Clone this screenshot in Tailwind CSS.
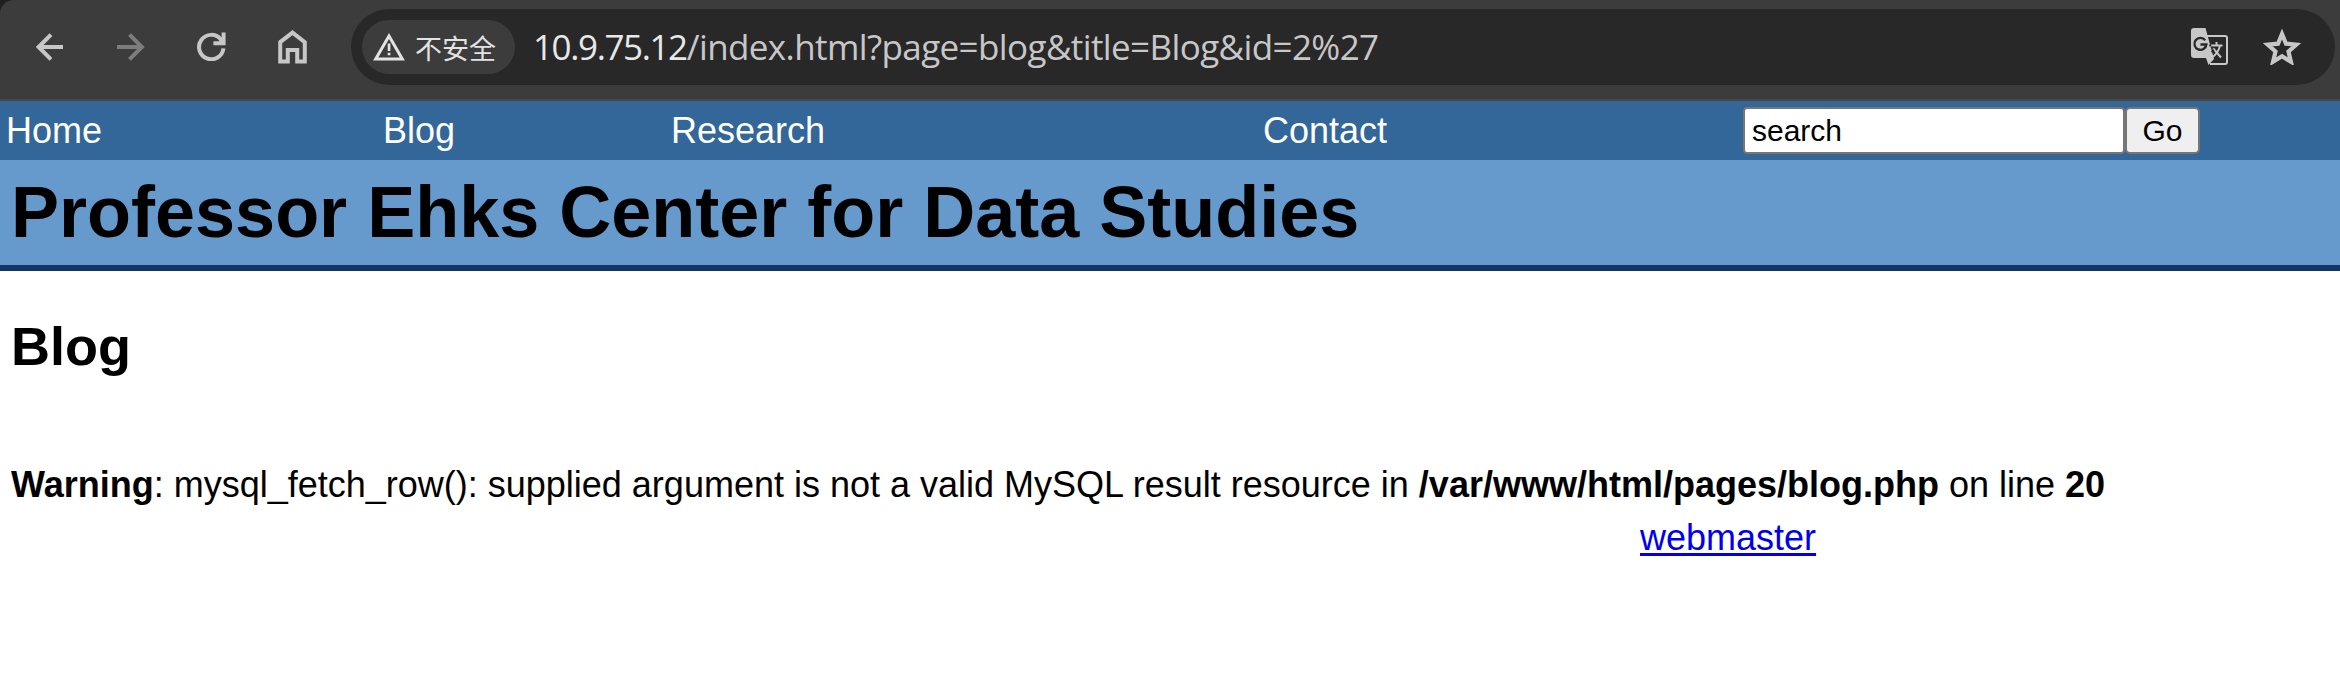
<!DOCTYPE html>
<html lang="en">
<head>
<meta charset="utf-8">
<title>Blog</title>
<script src="https://cdn.jsdelivr.net/npm/@tailwindcss/browser@4"></script>
</head>
<body class="w-[2340px] h-[697px] overflow-hidden bg-white text-black font-['Liberation_Sans',Arial,sans-serif] text-[36px] leading-[41px]">
<div class="bg-[#202020]">
<header class="h-[101px] bg-[#3c3c3c] border-b-2 border-[#474747] rounded-tl-[14px] flex items-start pt-[9px] pr-[5px] text-[#c7c7c7]">
  <svg class="w-7 h-7 ml-9 mt-6 shrink-0" viewBox="0 0 28 28" fill="none" stroke="currentColor" stroke-width="4"><path d="M27 14H3M15 1.6 2.6 14 15 26.4"/></svg>
  <svg class="w-7 h-7 ml-[53px] mt-6 shrink-0 text-[#7d7d7d]" viewBox="0 0 28 28" fill="none" stroke="currentColor" stroke-width="4"><path d="M0 14h24M12.5 1.6 24.9 14 12.5 26.4"/></svg>
  <svg class="w-[29px] h-[29px] ml-[52px] mt-[23px] shrink-0" viewBox="0 0 29 29" fill="none" stroke="currentColor" stroke-width="4"><path d="M26.4 16.4A12.2 12.2 0 1 1 23.6 7.2L26 10.4M26.6 0.4v10.8H16.4"/></svg>
  <svg class="w-[29px] h-[34px] ml-[52px] mt-[21px] shrink-0" viewBox="0 0 29 34" fill="none" stroke="currentColor" stroke-width="4"><path d="M2.2 12.2 14.5 2.6 26.8 12.2v19.4h-7.6V20H9.8v11.6H2.2z"/></svg>
  <div class="ml-11 h-[76px] flex-1 rounded-full bg-[#282828] flex items-center pl-[11px] pr-[35px]">
    <div class="w-[153px] h-[54px] rounded-full bg-[#3c3c3c] flex items-center pl-[11px] text-[#e3e3e3]">
      <svg class="w-8 h-7 shrink-0" viewBox="0 0 32 28"><path d="M16 3 29.3 26H2.7z" fill="none" stroke="currentColor" stroke-width="3"/><path d="M14.7 10.5h2.7v7.5h-2.7zM14.7 19.7h2.7v2.6h-2.7z" fill="currentColor"/></svg>
      <span class="ml-[10px] text-[27px] leading-[40px] whitespace-nowrap font-['Noto_Sans_CJK_SC',sans-serif] relative top-px">不安全</span>
    </div>
    <div class="ml-[18px] whitespace-nowrap text-[35px] tracking-[-0.6px] leading-[48px] font-['Open_Sans',sans-serif]"><span class="text-[#e8e8e8] tracking-[-1.4px]">10.9.75.12</span>/index.html?page=blog&amp;title=Blog&amp;id=2%27</div>
    <svg class="w-[38px] h-[38px] ml-auto shrink-0 relative left-px" viewBox="0 0 38 38"><path d="M14 8h20a2 2 0 0 1 2 2v24a2 2 0 0 1-2 2H19" fill="none" stroke="currentColor" stroke-width="2"/><path d="M3 0h11.5l8.5 31-5.5 6-2.5-7H3a3 3 0 0 1-3-3V3a3 3 0 0 1 3-3z" fill="currentColor"/><path d="M14.2 12.2A6 6 0 1 0 15.4 16.5H9.5" fill="none" stroke="#282828" stroke-width="2.3"/><path d="M19.8 17.4H31.5M25.5 14v3.4M29 17.6C27.8 23.5 24.4 27 20.6 30M22.2 20.4 30 29.5" fill="none" stroke="currentColor" stroke-width="2"/><path d="M18.2 17.4h2M20.5 24l2.5-2" stroke="#282828" stroke-width="1.8"/></svg>
    <svg class="w-[38px] h-9 ml-[34px] shrink-0 relative left-px" viewBox="0 0 38 36"><path d="m19 5 4 9.700 10.400.9-7.900 6.900 2.400 10.200L19 27.300 10.100 32.700l2.400-10.200L4.600 15.600l10.400-.9z" fill="none" stroke="currentColor" stroke-width="4.200"/></svg>
  </div>
</header>
</div>
<nav class="h-[59px] bg-[#336699] text-white flex items-start pt-[9px] pl-[6px]">
  <a class="w-[377px]">Home</a>
  <a class="w-[288px]">Blog</a>
  <a class="w-[592px]">Research</a>
  <a class="w-[480px]">Contact</a>
  <form class="flex -mt-[3px] text-[30px] text-black">
    <input value="search" class="w-[382px] h-[47px] border-2 border-[#767676] rounded-[4px] bg-white px-[7px] leading-[34px]">
    <button type="button" class="w-[75px] h-[47px] border-2 border-[#767676] rounded-[5px] bg-[#efefef] leading-[34px]">Go</button>
  </form>
</nav>
<div class="h-[111px] bg-[#6699cc] border-b-[6px] border-[#133369] pl-[11px] pt-[11px]">
  <h1 class="font-bold text-[72px] leading-[82px]">Professor Ehks Center for Data Studies</h1>
</div>
<main class="pl-[11px] pt-[44px]">
  <h2 class="font-bold text-[54px] leading-[62px]">Blog</h2>
  <p class="mt-[87px] whitespace-nowrap"><b>Warning</b>: mysql_fetch_row(): supplied argument is not a valid MySQL result resource in <b>/var/www/html/pages/blog.php</b> on line <b>20</b></p>
  <p class="mt-3 ml-[1629px]"><a class="text-[#0000ee] underline decoration-[3px] underline-offset-[3px]">webmaster</a></p>
</main>
</body>
</html>
